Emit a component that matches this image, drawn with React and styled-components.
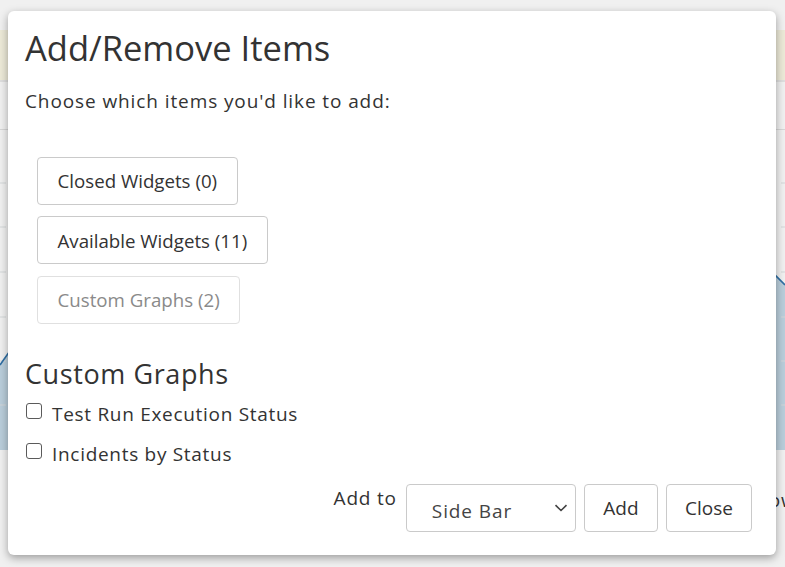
import React from 'react'
import styled, { createGlobalStyle } from 'styled-components'

const GlobalStyle = createGlobalStyle`
  html, body {
    margin: 0;
    padding: 0;
    width: 785px;
    height: 567px;
    overflow: hidden;
    font-family: "Open Sans", "Noto Sans", sans-serif;
    color: #333;
  }
`

/* dimmed page behind the dialog */
const Page = styled.div`
  position: relative;
  width: 785px;
  height: 567px;
  background: #f0f0f0;
  display: flex;
  flex-direction: column;
  overflow: hidden;
`
const TopStrip = styled.div`
  height: 30px;
  flex: none;
`
const Notice = styled.div`
  height: 50px;
  flex: none;
  background: #ece9d7;
  border-bottom: 2px solid #dedede;
`
const HeaderRow = styled.div`
  height: 47px;
  flex: none;
  border-bottom: 1px solid #d6d6d6;
`
const ChartArea = styled.div`
  height: 320px;
  flex: none;
`
const BehindText = styled.span`
  position: absolute;
  left: 745px;
  top: 488px;
  font-size: 19px;
  line-height: 24px;
  letter-spacing: 0.8px;
  color: #333;
`

const Modal = styled.div`
  position: absolute;
  left: 8px;
  top: 11px;
  width: 768px;
  height: 544px;
  box-sizing: border-box;
  background: #fff;
  border-radius: 6px;
  box-shadow: 0 3px 9px rgba(0, 0, 0, 0.35);
  padding: 17px 24px 23px 17px;
  display: flex;
  flex-direction: column;
`
const Title = styled.h1`
  margin: 0;
  font-size: 34.5px;
  font-weight: 400;
  line-height: 40px;
  color: #333;
`
const Lead = styled.p`
  margin: 21px 0 0;
  font-size: 19px;
  line-height: 24px;
  letter-spacing: 0.9px;
  color: #333;
`
const ButtonList = styled.div`
  display: flex;
  flex-direction: column;
  align-items: flex-start;
  gap: 11.5px;
  margin: 43.5px 0 0 12px;
`
const TabButton = styled.button`
  height: 48px;
  padding: 0 19.5px;
  box-sizing: border-box;
  font-family: inherit;
  font-size: 18.7px;
  color: ${({ muted }) => (muted ? '#8a8a8a' : '#333')};
  background: #fff;
  border: 1px solid ${({ muted }) => (muted ? '#e0e0e0' : '#cacaca')};
  border-radius: 4px;
`
const SubTitle = styled.h2`
  margin: 33.5px 0 0;
  font-size: 27px;
  font-weight: 400;
  line-height: 34px;
  letter-spacing: 0.6px;
  color: #333;
`
const CheckList = styled.div`
  display: flex;
  flex-direction: column;
  gap: 14px;
  margin-top: 9.7px;
`
const CheckRow = styled.label`
  display: flex;
  align-items: flex-start;
  gap: 10px;
  font-size: 19px;
  line-height: 26px;
  letter-spacing: 0.7px;
  color: #333;
`
const Box = styled.span`
  width: 16px;
  height: 16px;
  box-sizing: border-box;
  margin: 2px 0 0 1px;
  border: 1.5px solid #5a5a5a;
  border-radius: 3px;
  flex: none;
`
const Footer = styled.div`
  margin-top: auto;
  display: flex;
  justify-content: flex-end;
  align-items: center;
  gap: 8px;
`
const FooterLabel = styled.span`
  align-self: flex-start;
  margin: 1.6px 1px 0 0;
  font-size: 19px;
  line-height: 24px;
  letter-spacing: 0.8px;
`
const Select = styled.div`
  width: 170px;
  height: 48px;
  box-sizing: border-box;
  border: 1px solid #cacaca;
  border-radius: 4px;
  display: flex;
  align-items: center;
  justify-content: space-between;
  padding: 0 7px 0 25px;
  font-size: 19px;
  line-height: 24px;
  letter-spacing: 0.9px;
  color: #444;
`
const SelectValue = styled.span`
  margin-top: 5px;
`
const FooterButton = styled.button`
  height: 48px;
  padding: 0 ${({ px }) => px}px;
  box-sizing: border-box;
  font-family: inherit;
  font-size: 19px;
  color: #333;
  background: #fff;
  border: 1px solid #cacaca;
  border-radius: 4px;
`

const Chevron = () => (
  <svg width="14" height="8" viewBox="0 0 14 8">
    <path d="M1.5 1.2 L7 6.5 L12.5 1.2" fill="none" stroke="#444" strokeWidth="1.6" />
  </svg>
)

const grid = [53, 97, 142, 187, 231, 275]

const ChartDrawing = () => (
  <svg width="785" height="320" viewBox="0 0 785 320">
    <path d="M0 235 C 200 -60, 600 -40, 785 155 L785 320 L0 320 Z" fill="#b9cdda" />
    {grid.map((y) => (
      <line key={y} x1="0" y1={y} x2="785" y2={y} stroke="#d2d5d8" strokeWidth="1.2" strokeDasharray="9 5" strokeDashoffset="3" />
    ))}
    <path d="M0 235 C 200 -60, 600 -40, 785 155" fill="none" stroke="#2f6ea3" strokeWidth="1.6" />
  </svg>
)

export default function App() {
  return (
    <>
      <GlobalStyle />
      <Page>
        <TopStrip />
        <Notice />
        <HeaderRow />
        <ChartArea>
          <ChartDrawing />
        </ChartArea>
        <BehindText>Show</BehindText>
        <Modal>
          <Title>Add/Remove Items</Title>
          <Lead>Choose which items you'd like to add:</Lead>
          <ButtonList>
            <TabButton>Closed Widgets (0)</TabButton>
            <TabButton>Available Widgets (11)</TabButton>
            <TabButton muted>Custom Graphs (2)</TabButton>
          </ButtonList>
          <SubTitle>Custom Graphs</SubTitle>
          <CheckList>
            <CheckRow><Box />Test Run Execution Status</CheckRow>
            <CheckRow><Box />Incidents by Status</CheckRow>
          </CheckList>
          <Footer>
            <FooterLabel>Add to</FooterLabel>
            <Select>
              <SelectValue>Side Bar</SelectValue>
              <Chevron />
            </Select>
            <FooterButton px={18.5}>Add</FooterButton>
            <FooterButton px={18}>Close</FooterButton>
          </Footer>
        </Modal>
      </Page>
    </>
  )
}
